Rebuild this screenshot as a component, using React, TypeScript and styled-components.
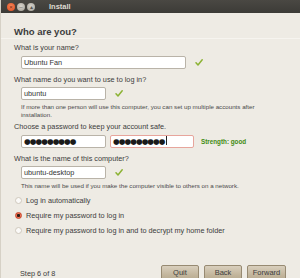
import React from "react";
import styled, { createGlobalStyle } from "styled-components";

const Global = createGlobalStyle`
  html, body { margin: 0; padding: 0; background: #eeebe4; }
  body { font-family: "Liberation Sans", Arial, sans-serif; }
  * { box-sizing: border-box; }
`;

const Window = styled.div`
  width: 300px;
  height: 278px;
  overflow: hidden;
  display: flex;
  flex-direction: column;
  background: #eeebe4;
  border-left: 1px solid #d6d1c6;
`;

const TitleBar = styled.div`
  height: 13px;
  flex: none;
  display: flex;
  align-items: center;
  padding-left: 6px;
  background: linear-gradient(#4a4843, #3c3b37);
`;

const WinButton = styled.span<{ $kind: "close" | "other" }>`
  width: 8px;
  height: 8px;
  border-radius: 50%;
  margin-right: 2px;
  background: ${(p) =>
    p.$kind === "close"
      ? "radial-gradient(circle at 50% 40%, #f4865a, #df4a1c)"
      : "radial-gradient(circle at 50% 40%, #d8d5cd, #a19d94)"};
  display: flex;
  align-items: center;
  justify-content: center;
  font-size: 6px;
  line-height: 1;
  color: ${(p) => (p.$kind === "close" ? "#7a2a10" : "#5a5853")};
`;

const Title = styled.span`
  margin-left: 12px;
  font-size: 7.5px;
  font-weight: bold;
  color: #dfdbd2;
`;

const Body = styled.div`
  display: flex;
  flex-direction: column;
  padding: 13px 0 0 0;
`;

const Heading = styled.div`
  font-size: 9.5px;
  font-weight: bold;
  line-height: 12px;
  color: #3c3c3c;
  padding-left: 13px;
`;

const Separator = styled.div`
  height: 1px;
  background: #dcd7cd;
  border-bottom: 1px solid #f6f4ef;
`;

const Content = styled.div`
  display: flex;
  flex-direction: column;
  padding-left: 13px;
`;

const Label = styled.div<{ $top: number; $gap: number }>`
  margin-top: ${(p) => p.$top}px;
  margin-bottom: ${(p) => p.$gap}px;
  font-size: 7.3px;
  line-height: 10px;
  color: #3c3c3c;
`;

const FieldRow = styled.div`
  display: flex;
  align-items: center;
  padding-left: 7px;
  gap: 4px;
`;

const Input = styled.div<{ $w: number; $warn?: boolean }>`
  width: ${(p) => p.$w}px;
  height: 13px;
  background: #fff;
  border: 1px solid ${(p) => (p.$warn ? "#e7a59c" : "#b9b3a8")};
  border-radius: 2px;
  padding-left: 2px;
  font-size: 7.3px;
  line-height: 11px;
  color: #333;
  white-space: nowrap;
  overflow: hidden;
`;

const Dots = styled.span`
  font-family: "DejaVu Sans", sans-serif;
  font-size: 7.6px;
  letter-spacing: -0.9px;
  color: #1a1a1a;
`;

const Caret = styled.span`
  display: inline-block;
  width: 1px;
  height: 9px;
  margin-left: 1px;
  vertical-align: -1px;
  background: #222;
`;

const CheckWrap = styled.span<{ $ml: number }>`
  margin-left: ${(p) => p.$ml}px;
  display: flex;
`;

const Strength = styled.span`
  margin-left: 3px;
  font-size: 6.3px;
  font-weight: bold;
  color: #3e8a10;
`;

const Hint = styled.div<{ $top: number }>`
  margin-top: ${(p) => p.$top}px;
  padding-left: 7px;
  font-size: 6.2px;
  line-height: 8px;
  color: #4a4a4a;
  width: 270px;
`;

const Options = styled.div`
  display: flex;
  flex-direction: column;
  gap: 1px;
  margin-top: 3px;
  padding-left: 1px;
`;

const Option = styled.div`
  display: flex;
  align-items: center;
  height: 14px;
  gap: 4px;
  font-size: 7.3px;
  color: #3c3c3c;
`;

const Radio = styled.span<{ $on?: boolean }>`
  width: 7px;
  height: 7px;
  border-radius: 50%;
  border: 1px solid ${(p) => (p.$on ? "#c8462a" : "#cfc9bd")};
  background: ${(p) =>
    p.$on ? "radial-gradient(circle, #2b1a14 0 1.3px, #ef7a5c 1.8px, #e2553a)" : "#fbfaf8"};
`;

const Footer = styled.div`
  display: flex;
  align-items: flex-start;
  margin-top: 28px;
  padding: 0 14px 0 19px;
`;

const Step = styled.div`
  padding-top: 4px;
  font-size: 7.3px;
  line-height: 10px;
  color: #3c3c3c;
  flex: 1;
`;

const Buttons = styled.div`
  display: flex;
  gap: 5px;
`;

const Button = styled.div<{ $w: number }>`
  width: ${(p) => p.$w}px;
  height: 22px;
  border: 1px solid #978a72;
  border-radius: 2px;
  background: linear-gradient(#d9cfbd, #c2b59c 45%, #ad9e83);
  font-size: 7.5px;
  line-height: 14px;
  text-align: center;
  color: #3c3c3c;
`;

const Check = () => (
  <svg width="8" height="7" viewBox="0 0 8 7">
    <path
      d="M1 3.8 L3 6 L7.2 0.8"
      fill="none"
      stroke="#8cb334"
      strokeWidth="1.5"
      strokeLinecap="round"
      strokeLinejoin="round"
    />
  </svg>
);

export default function App() {
  return (
    <Window>
      <Global />
      <TitleBar>
        <WinButton $kind="close">×</WinButton>
        <WinButton $kind="other">–</WinButton>
        <WinButton $kind="other">▴</WinButton>
        <Title>Install</Title>
      </TitleBar>
      <Body>
        <Heading>Who are you?</Heading>
        <Separator />
        <Content>
          <Label $top={4} $gap={3}>What is your name?</Label>
          <FieldRow>
            <Input $w={165}>Ubuntu Fan</Input>
            <CheckWrap $ml={5}><Check /></CheckWrap>
          </FieldRow>

          <Label $top={6} $gap={2}>What name do you want to use to log in?</Label>
          <FieldRow>
            <Input $w={85}>ubuntu</Input>
            <CheckWrap $ml={5}><Check /></CheckWrap>
          </FieldRow>
          <Hint $top={3}>
            If more than one person will use this computer, you can set up multiple accounts after
            installation.
          </Hint>

          <Label $top={3} $gap={3}>Choose a password to keep your account safe.</Label>
          <FieldRow>
            <Input $w={85}><Dots>●●●●●●●●●</Dots></Input>
            <Input $w={84} $warn><Dots>●●●●●●●●●</Dots><Caret /></Input>
            <Strength>Strength: good</Strength>
          </FieldRow>

          <Label $top={6} $gap={2}>What is the name of this computer?</Label>
          <FieldRow>
            <Input $w={85}>ubuntu-desktop</Input>
            <CheckWrap $ml={5}><Check /></CheckWrap>
          </FieldRow>
          <Hint $top={3}>
            This name will be used if you make the computer visible to others on a network.
          </Hint>

          <Options>
            <Option><Radio />Log in automatically</Option>
            <Option><Radio $on />Require my password to log in</Option>
            <Option><Radio />Require my password to log in and to decrypt my home folder</Option>
          </Options>
        </Content>
        <Footer>
          <Step>Step 6 of 8</Step>
          <Buttons>
            <Button $w={38}>Quit</Button>
            <Button $w={38}>Back</Button>
            <Button $w={39}>Forward</Button>
          </Buttons>
        </Footer>
      </Body>
    </Window>
  );
}
